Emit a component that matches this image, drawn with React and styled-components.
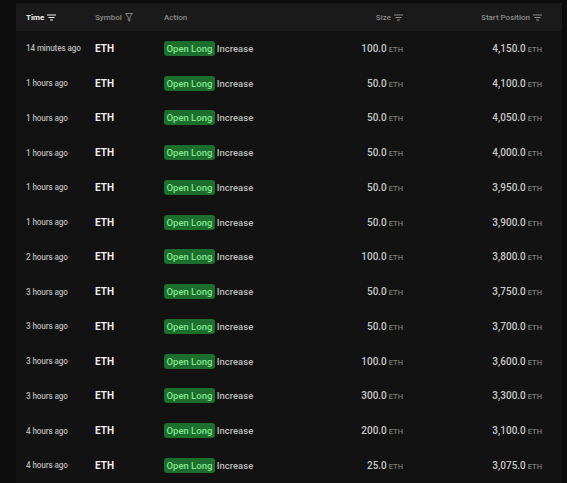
import styled, { createGlobalStyle } from "styled-components"

const GlobalStyle = createGlobalStyle`
    html, body {
        margin: 0;
        padding: 0;
        background-color: #0c0c0c;
        font-family: Roboto, "Liberation Sans", sans-serif;
    }
`

const Page = styled.div`
    width: 567px;
    height: 483px;
    overflow: hidden;
    padding: 3px 5px 0 16px;
    box-sizing: border-box;
`

const Table = styled.div`
    background-color: #121212;
`

const Row = styled.div`
    display: grid;
    grid-template-columns: 69px 69px 140px 99px 139px;
    align-items: center;
    padding: 0 20px 0 10px;
    height: ${p => p.$header ? "28px" : "34.75px"};
    background-color: ${p => p.$header ? "#1a1a1a" : "transparent"};
`

const HeadCell = styled.div`
    display: flex;
    align-items: center;
    gap: 3px;
    justify-content: ${p => p.$right ? "flex-end" : "flex-start"};
    font-size: 8px;
    font-weight: ${p => p.$active ? 700 : 500};
    color: ${p => p.$active ? "#f2f2f2" : "#8b8b8b"};
`

const Time = styled.div`
    font-size: 8.2px;
    font-weight: 500;
    color: #b5b5b5;
    letter-spacing: -0.15px;
`

const Symbol = styled.div`
    font-size: 10px;
    font-weight: 700;
    color: #f0f0f0;
`

const Action = styled.div`
    display: flex;
    align-items: center;
    gap: 2px;
    font-size: 9.5px;
    font-weight: 500;
`

const Badge = styled.span`
    background-color: #1c6e2c;
    color: #86e592;
    border-radius: 3px;
    padding: 2px 2.5px;
    line-height: 11px;
`

const ActionText = styled.span`
    color: #bdbdbd;
`

const Amount = styled.div`
    text-align: right;
    font-size: 10px;
    font-weight: 500;
    color: #c8c8c8;
`

const Unit = styled.span`
    font-size: 7.5px;
    color: #7d7d7d;
    margin-left: 2px;
`

const SortIcon = () => (
    <svg width="9" height="7" viewBox="0 0 9 7" fill="none" stroke="currentColor" strokeWidth="1">
        <path d="M0 1h9M1.5 3.5h6M3 6h3" />
    </svg>
)

const FunnelIcon = () => (
    <svg width="8" height="9" viewBox="0 0 8 9" fill="none" stroke="currentColor" strokeWidth="0.9">
        <path d="M0.5 0.5h7L4.8 4.2v4L3.2 7.2V4.2z" />
    </svg>
)

const rows = [
    ["14 minutes ago", "100.0", "4,150.0"],
    ["1 hours ago", "50.0", "4,100.0"],
    ["1 hours ago", "50.0", "4,050.0"],
    ["1 hours ago", "50.0", "4,000.0"],
    ["1 hours ago", "50.0", "3,950.0"],
    ["1 hours ago", "50.0", "3,900.0"],
    ["2 hours ago", "100.0", "3,800.0"],
    ["3 hours ago", "50.0", "3,750.0"],
    ["3 hours ago", "50.0", "3,700.0"],
    ["3 hours ago", "100.0", "3,600.0"],
    ["3 hours ago", "300.0", "3,300.0"],
    ["4 hours ago", "200.0", "3,100.0"],
    ["4 hours ago", "25.0", "3,075.0"],
]

const App = () => {
    return (
        <Page>
            <GlobalStyle />
            <Table>
                <Row $header>
                    <HeadCell $active>Time <SortIcon /></HeadCell>
                    <HeadCell>Symbol <FunnelIcon /></HeadCell>
                    <HeadCell>Action</HeadCell>
                    <HeadCell $right>Size <SortIcon /></HeadCell>
                    <HeadCell $right>Start Position <SortIcon /></HeadCell>
                </Row>
                {rows.map(([time, size, start], i) => (
                    <Row key={i}>
                        <Time>{time}</Time>
                        <Symbol>ETH</Symbol>
                        <Action>
                            <Badge>Open Long</Badge>
                            <ActionText>Increase</ActionText>
                        </Action>
                        <Amount>{size}<Unit>ETH</Unit></Amount>
                        <Amount>{start}<Unit>ETH</Unit></Amount>
                    </Row>
                ))}
            </Table>
        </Page>
    )
}

export default App
